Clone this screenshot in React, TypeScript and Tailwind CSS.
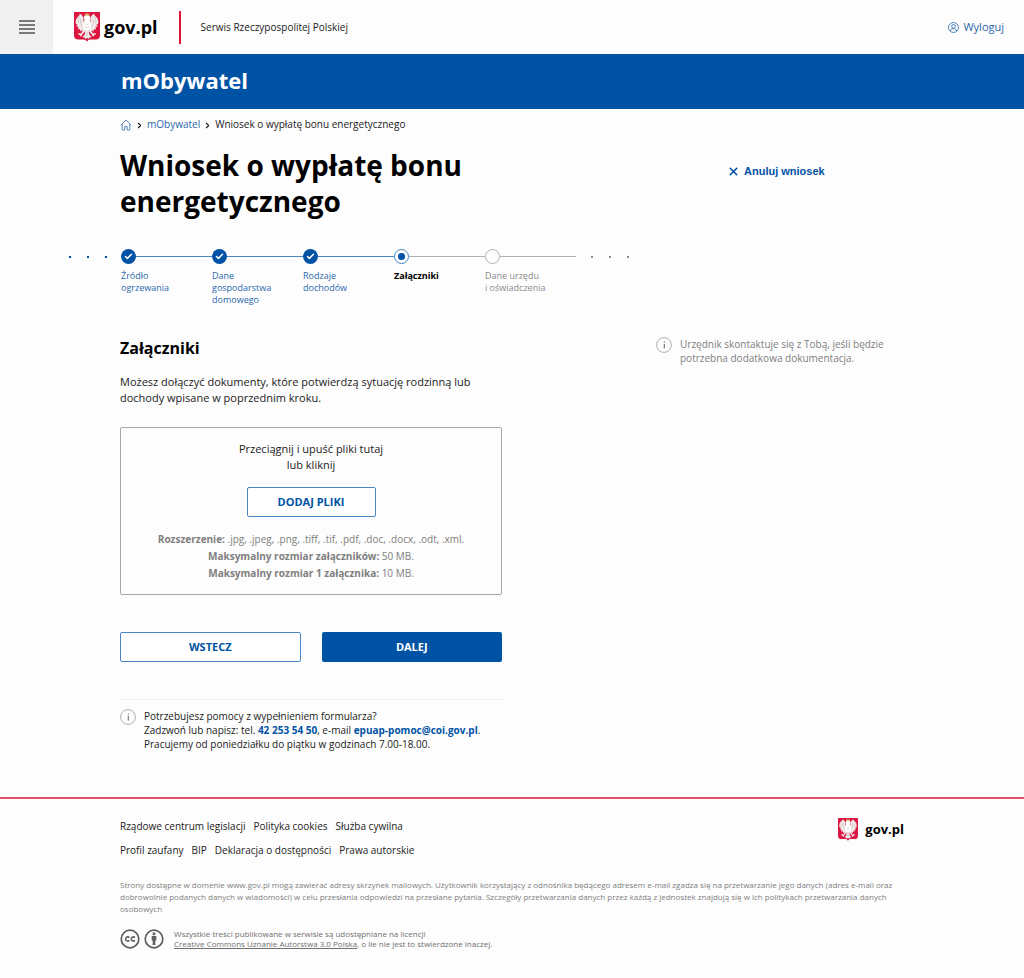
import { X, Check, ChevronRight } from "lucide-react";
import { clsx } from "clsx";

type StepState = "done" | "current" | "todo";

const steps: { label: string; state: StepState }[] = [
  { label: "Źródło ogrzewania", state: "done" },
  { label: "Dane gospodarstwa domowego", state: "done" },
  { label: "Rodzaje dochodów", state: "done" },
  { label: "Załączniki", state: "current" },
  { label: "Dane urzędu i\u00a0oświadczenia", state: "todo" },
];

const footerLinks = [
  ["Rządowe centrum legislacji", "Polityka cookies", "Służba cywilna"],
  ["Profil zaufany", "BIP", "Deklaracja o dostępności", "Prawa autorskie"],
];

export default function App() {
  return (
    <div className="min-h-screen bg-[#fdfdfd] text-[#1b1b1b] font-['Open_Sans',sans-serif]">
      <Header />
      <div className="bg-[#0052a5] h-[55px] px-[121px] pb-[2px] flex items-center">
        <span className="text-[22px] font-bold text-white">mObywatel</span>
      </div>

      <main className="max-w-[784px] mx-auto">
        <Breadcrumbs />
        <div className="flex items-start mt-[7px]">
          <h1 className="w-[382px] text-[28px] leading-9 font-bold text-black">
            Wniosek o wypłatę bonu energetycznego
          </h1>
          <button className="ml-[225px] mt-4 flex items-center gap-1 text-[#0052a5] text-[11px] leading-4 font-bold font-['Liberation_Sans',sans-serif]">
            <X size={13} strokeWidth={3} />
            Anuluj wniosek
          </button>
        </div>
        <Stepper />

        <div className="flex items-start mt-[30px]">
          <form className="w-[382px]" onSubmit={(e) => e.preventDefault()}>
            <h2 className="text-[16px] leading-6 font-bold text-black">Załączniki</h2>
            <p className="mt-[14px] text-[11px] leading-4">
              Możesz dołączyć dokumenty, które potwierdzą sytuację rodzinną lub dochody wpisane w poprzednim kroku.
            </p>
            <Dropzone />
            <div className="grid grid-cols-2 gap-[21px] mt-[37px]">
              <button type="button" className="h-[30px] rounded-[2px] border border-[#4a86c5] bg-white text-[#0052a5] text-[11px] font-bold">
                WSTECZ
              </button>
              <button type="submit" className="h-[30px] rounded-[2px] bg-[#0052a5] text-white text-[11px] font-bold">
                DALEJ
              </button>
            </div>
          </form>
          <div className="ml-[154px] mt-px flex items-start gap-2">
            <InfoIcon />
            <p className="w-[210px] text-[10px] leading-[14px] text-[#808080]">
              Urzędnik skontaktuje się z Tobą, jeśli będzie potrzebna dodatkowa dokumentacja.
            </p>
          </div>
        </div>

        <div className="w-[382px] mt-[37px] pt-[9px] border-t border-[#f0f0e8] flex items-start gap-2">
          <InfoIcon />
          <p className="text-[10px] leading-[14px]">
            Potrzebujesz pomocy z wypełnieniem formularza?
            <br />
            Zadzwoń lub napisz: tel. <a href="tel:422535450" className="font-bold text-[#0052a5]">42 253 54 50</a>, e-mail{" "}
            <a href="mailto:epuap-pomoc@coi.gov.pl" className="font-bold text-[#0052a5]">epuap-pomoc@coi.gov.pl</a>.
            <br />
            Pracujemy od poniedziałku do piątku w godzinach 7.00-18.00.
          </p>
        </div>
      </main>

      <Footer />
    </div>
  );
}

function Header() {
  return (
    <header className="h-[54px] flex items-center">
      <button aria-label="Menu" className="w-[53px] h-full bg-[#f0f0f0] flex flex-col items-center justify-center gap-[2px]">
        <span className="w-4 h-[2px] bg-[#7a7a7a]" />
        <span className="w-4 h-[2px] bg-[#7a7a7a]" />
        <span className="w-4 h-[2px] bg-[#7a7a7a]" />
        <span className="w-4 h-[2px] bg-[#7a7a7a]" />
      </button>
      <a href="#" className="ml-[21px] flex items-center gap-1 text-[18px] font-bold text-black">
        <Emblem className="w-[26px] h-[30px]" />
        gov.pl
      </a>
      <span className="ml-[21px] w-[2px] h-[33px] bg-[#dc143c]" />
      <span className="ml-5 text-[10px]">Serwis Rzeczypospolitej Polskiej</span>
      <a href="#" className="ml-auto mr-5 flex items-center gap-1 text-[11px] text-[#2a68ac]">
        <svg viewBox="0 0 12 12" className="w-[11px] h-[11px]" fill="none" stroke="currentColor">
          <circle cx="6" cy="6" r="5.4" strokeWidth="0.9" />
          <circle cx="6" cy="4.8" r="2" strokeWidth="0.9" />
          <path d="M2.6 9.9c.4-1.9 1.6-2.7 3.4-2.7s3 .8 3.4 2.7" strokeWidth="0.9" />
        </svg>
        Wyloguj
      </a>
    </header>
  );
}

function Breadcrumbs() {
  return (
    <nav aria-label="Okruszki" className="h-[31px] flex items-center gap-[3px] text-[10px]">
      <a href="#" aria-label="Strona główna" className="text-[#4a7fb5]">
        <svg viewBox="0 0 12 12" className="w-3 h-3" fill="none" stroke="currentColor" strokeWidth="0.9">
          <path d="M.8 6.2 6 1l5.2 5.2M2.2 5v6h2.6V7.6h2.4V11h2.6V5" />
        </svg>
      </a>
      <ChevronRight size={9} strokeWidth={3} className="mt-[2px]" />
      <a href="#" className="text-[#2a68ac]">mObywatel</a>
      <ChevronRight size={9} strokeWidth={3} className="mt-[2px]" />
      <span>Wniosek o wypłatę bonu energetycznego</span>
    </nav>
  );
}

function Stepper() {
  return (
    <div className="-ml-[51px] w-[560px] mt-[30px] flex items-start">
      <Dots className="text-[#0052a5]" />
      <ol className="flex-1 grid grid-cols-5 ml-[14px] mr-[15px]">
        {steps.map((s, i) => (
          <li key={s.label}>
            <div className="flex items-center">
              <StepMark state={s.state} />
              <span className={clsx("flex-1 h-px", i < 3 ? "bg-[#4a86c5]" : "bg-[#b0b0b0]")} />
            </div>
            <p
              className={clsx(
                "mt-[6px] w-[72px] text-[9px] leading-3",
                s.state === "done" && "text-[#2a68ac]",
                s.state === "current" && "font-bold text-black",
                s.state === "todo" && "text-[#8a8a8a]",
              )}
            >
              {s.label}
            </p>
          </li>
        ))}
      </ol>
      <Dots className="text-[#8a8a8a]" />
    </div>
  );
}

function StepMark({ state }: { state: StepState }) {
  if (state === "done") {
    return (
      <span className="size-[15px] rounded-full bg-[#0052a5] text-white flex items-center justify-center">
        <Check size={9} strokeWidth={4} />
      </span>
    );
  }
  if (state === "current") {
    return (
      <span className="size-[15px] rounded-full border border-[#4a86c5] bg-white flex items-center justify-center">
        <span className="size-[7px] rounded-full bg-[#0052a5]" />
      </span>
    );
  }
  return <span className="size-[15px] rounded-full border border-[#b0b0b0] bg-white" />;
}

function Dots({ className }: { className: string }) {
  return (
    <span className={clsx("h-[15px] flex items-center gap-4", className)}>
      <span className="size-[2px] bg-current" />
      <span className="size-[2px] bg-current" />
      <span className="size-[2px] bg-current" />
    </span>
  );
}

function Dropzone() {
  return (
    <div className="mt-[21px] rounded-[2px] border border-[#a6a6a6] pt-[13px] pb-3 flex flex-col items-center text-center">
      <p className="text-[11px] leading-4">
        Przeciągnij i upuść pliki tutaj
        <br />
        lub kliknij
      </p>
      <button type="button" className="mt-[14px] w-[129px] h-[30px] rounded-[2px] border border-[#4a86c5] bg-white text-[#0052a5] text-[11px] font-bold">
        DODAJ PLIKI
      </button>
      <p className="mt-[14px] text-[10px] leading-[17px] text-[#808080]">
        <b>Rozszerzenie:</b> .jpg, .jpeg, .png, .tiff, .tif, .pdf, .doc, .docx, .odt, .xml.
        <br />
        <b>Maksymalny rozmiar załączników:</b> 50 MB.
        <br />
        <b>Maksymalny rozmiar 1 załącznika:</b> 10 MB.
      </p>
    </div>
  );
}

function Footer() {
  return (
    <footer className="mt-[46px] border-t-2 border-[#dc5068]">
      <div className="max-w-[784px] mx-auto pt-[15px] pb-6">
        <div className="flex justify-between items-start">
          <div className="flex flex-col text-[10px] leading-6">
            {footerLinks.map((row) => (
              <div key={row[0]} className="flex gap-2">
                {row.map((label) => (
                  <a key={label} href="#">{label}</a>
                ))}
              </div>
            ))}
          </div>
          <a href="#" className="mt-1 flex items-center gap-[7px] text-[13px] font-bold text-black">
            <Emblem className="w-5 h-[23px]" />
            gov.pl
          </a>
        </div>
        <p className="mt-[17px] text-[8px] leading-3 text-[#808080]">
          Strony dostępne w domenie www.gov.pl mogą zawierać adresy skrzynek mailowych. Użytkownik korzystający z odnośnika będącego adresem e-mail zgadza się na przetwarzanie jego danych (adres e-mail oraz dobrowolnie podanych danych w wiadomości) w celu przesłania odpowiedzi na przesłane pytania. Szczegóły przetwarzania danych przez każdą z jednostek znajdują się w ich politykach przetwarzania danych osobowych
        </p>
        <div className="mt-[14px] flex items-center">
          <svg viewBox="0 0 20 20" className="size-5" fill="none" stroke="#606060">
            <circle cx="10" cy="10" r="8.8" strokeWidth="1.7" />
            <path d="M9.3 8.6a2.1 2.1 0 1 0 0 2.8M14.9 8.6a2.1 2.1 0 1 0 0 2.8" strokeWidth="1.6" />
          </svg>
          <svg viewBox="0 0 20 20" className="ml-1 size-5" fill="none">
            <circle cx="10" cy="10" r="8.8" stroke="#606060" strokeWidth="1.7" />
            <circle cx="10" cy="4.8" r="1.5" fill="#606060" />
            <path d="M7.7 7h4.6v4.6h-1V16H8.700v-4.400h-1z" fill="#606060" />
          </svg>
          <p className="ml-[10px] text-[8px] leading-[10px] text-[#707070]">
            Wszystkie treści publikowane w serwisie są udostępniane na licencji
            <br />
            <a href="#" className="underline">Creative Commons Uznanie Autorstwa 3.0 Polska</a>, o ile nie jest to stwierdzone inaczej.
          </p>
        </div>
      </div>
    </footer>
  );
}

function InfoIcon() {
  return (
    <svg viewBox="0 0 16 16" className="size-4 shrink-0" fill="none">
      <circle cx="8" cy="8" r="7.4" stroke="#b0b0b0" />
      <path d="M8.300 4.600v1.200M8.300 7v4.600" stroke="#707070" strokeWidth="1.1" />
    </svg>
  );
}

function Emblem({ className }: { className: string }) {
  return (
    <svg viewBox="0 0 52 60" className={className}>
      <path d="M0 0h52v46c0 6-3 9-9 9H33c-4 0-6 2-7 5-1-3-3-5-7-5H9c-6 0-9-3-9-9z" fill="#dc1440" />
      {/* wings */}
      <path
        d="M22 28C20 24 19 20 19 15c0-6-3-10-8-12 1 2 0 4-2 5-5 4-7 10-5 17l3-1-2 6 4-1-1 6 4-1 1 5 4-3v5l4-4 2 4zM30 28c2-4 3-8 3-13 0-6 3-10 8-12-1 2 0 4 2 5 5 4 7 10 5 17l-3-1 2 6-4-1 1 6-4-1-1 5-4-3v5l-4-4-2 4z"
        fill="#f1eaea"
      />
      {/* head and body */}
      <path d="M19 12c1-4 3-6 7-6s7 2 7 6c0 3-2 4-1 7 2 3 3 6 2 11-1 4-4 8-8 8s-7-4-8-8c-1-5 0-8 2-11 1-3 2-4-1-7z" fill="#fff" />
      {/* legs and tail */}
      <path
        d="m20 34-6 9-5-1-1 3 4 1v3l3-1 2-4 6-6zM32 34l6 9 5-1 1 3-4 1v3l-3-1-2-4-6-6zM23 37h6l2 9 5 4-5 1-1 3-4-2-4 2-1-3-5-1 5-4z"
        fill="#f1eaea"
      />
      <path d="M11 9c-3 4-3 8-2 13M14 14c-2 6 0 12 3 17M41 9c3 4 3 8 2 13M38 14c2 6 0 12-3 17M23 24l3 2 3-2M22 29l4 2 4-2M26 40v9" fill="none" stroke="#b9a6a8" strokeWidth="1" />
      <path d="m22 7-1-4 3 1 2-2 2 2 3-1-1 4zM20 12l-3 2 4 1z" fill="#d8b56a" />
    </svg>
  );
}
